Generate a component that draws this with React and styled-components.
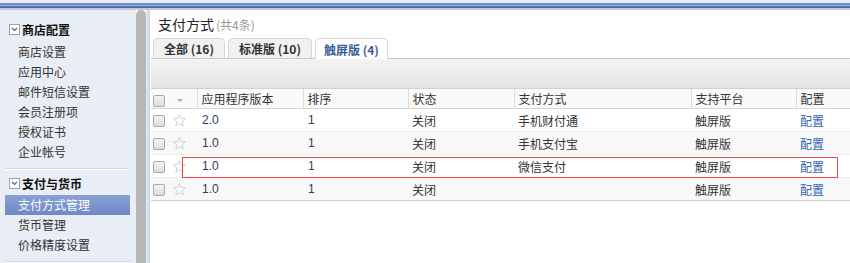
import React from 'react';
import styled, { createGlobalStyle } from 'styled-components';

const GlobalStyle = createGlobalStyle`
  html, body { margin: 0; padding: 0; background: #fff; }
  body {
    font-family: "Liberation Sans", Arial, "Noto Sans CJK SC", sans-serif;
    font-size: 12px;
    color: #333;
  }
`;

const Page = styled.div`
  width: 850px;
  height: 263px;
  overflow: hidden;
  display: flex;
  flex-direction: column;
`;

const TopBar = styled.div`
  height: 10px;
  flex: none;
  background: linear-gradient(to bottom,
    #e9eef5 0, #e9eef5 3px,
    #7d9ad3 3px, #5579bf 5px,
    #a9bde3 5px, #a9bde3 6px,
    #4d6fb4 6px, #4d6fb4 8px,
    #c3c9d6 8px, #c3c9d6 10px);
`;

const Body = styled.div`
  flex: 1;
  display: flex;
  min-height: 0;
`;

const Sidebar = styled.div`
  width: 136px;
  flex: none;
  background: #e9edf5;
`;

const Scrollbar = styled.div`
  width: 10px;
  flex: none;
  background: #b6b6b6;
  border-radius: 5px 5px 0 0;
`;

const Edge = styled.div`
  width: 4px;
  flex: none;
  background: linear-gradient(to right, #e6ebf4, #c4d2ec);
`;

const Group = styled.div`
  padding: ${p => p.$first ? '9px' : '4px'} 0 6px;
  margin: 0 6px 0 5px;
  border-bottom: 1px solid #d3dae6;
  box-shadow: 0 1px 0 #fafbfd;
`;

const GroupTitle = styled.div`
  display: flex;
  align-items: center;
  gap: 2px;
  height: 20px;
  margin-bottom: ${p => p.$first ? '3px' : '2px'};
  padding-left: 4px;
  font-family: "Noto Sans CJK SC", sans-serif;
  font-weight: bold;
  font-size: 12px;
  color: #111;
`;

const Toggle = styled.span`
  width: 9px;
  height: 9px;
  border: 1px solid #9aa3b3;
  background: #fff;
  display: inline-flex;
  align-items: center;
  justify-content: center;
  flex: none;
`;

const NavItem = styled.div`
  height: 20px;
  line-height: 20px;
  padding-left: 13px;
  font-family: "Noto Sans CJK SC", sans-serif;
  font-size: 12px;
  color: ${p => p.$active ? '#fff' : '#333'};
  background: ${p => p.$active ? 'linear-gradient(to bottom, #8aa1d6, #6f89c6)' : 'transparent'};
`;

const Main = styled.div`
  flex: 1;
  position: relative;
  background: #fff;
  padding-left: 1px;
`;

const Title = styled.div`
  height: 28px;
  padding: 0 0 0 7px;
  display: flex;
  align-items: center;
  font-family: "Noto Sans CJK SC", sans-serif;
  font-size: 14px;
  color: #222;
`;

const Count = styled.span`
  font-size: 12px;
  color: #999;
  margin-left: 2px;
`;

const Tabs = styled.div`
  display: flex;
  align-items: flex-end;
  gap: 3px;
  height: 20px;
  padding-left: 2px;
  border-bottom: 1px solid #c9c9c9;
`;

const Tab = styled.div`
  height: ${p => p.$active ? '20px' : '19px'};
  padding: 0 ${p => p.$active ? '8px' : '10px'};
  margin-bottom: ${p => p.$active ? '-1px' : '0'};
  display: flex;
  align-items: center;
  border: 1px solid #d6d6d6;
  border-bottom: none;
  border-radius: 5px 5px 0 0;
  background: ${p => p.$active ? '#fff' : '#f1f1f1'};
  font-family: "Noto Sans CJK SC", sans-serif;
  font-weight: bold;
  font-size: 12px;
  color: ${p => p.$active ? '#3d5d9b' : '#333'};
`;

const Toolbar = styled.div`
  height: 29px;
  background: linear-gradient(to bottom, #f3f3f3, #e4e4e4);
  border-bottom: 1px solid #d2d2d2;
`;

const Table = styled.table`
  width: 100%;
  border-collapse: collapse;
  table-layout: fixed;
`;

const Th = styled.th`
  height: 19px;
  padding: 0 0 0 ${p => p.$pad ?? 4}px;
  text-align: left;
  font-weight: normal;
  font-family: "Noto Sans CJK SC", sans-serif;
  font-size: 12px;
  color: #333;
  background: #fafafa;
  border-bottom: 1px solid #d6d6d6;
  border-left: ${p => p.$noSep ? 'none' : '1px solid #dcdcdc'};
`;

const Tr = styled.tr`
  background: ${p => p.$alt ? '#f8f8f8' : '#fff'};
`;

const Td = styled.td`
  height: 22px;
  padding: 0 0 0 ${p => p.$pad || 4}px;
  font-family: "Liberation Sans", Arial, "Noto Sans CJK SC", sans-serif;
  font-size: 12px;
  color: ${p => p.$num ? '#2e3e5e' : '#333'};
  border-bottom: 1px solid ${p => p.$last ? '#d0d0d0' : '#ececec'};
  white-space: nowrap;
`;

const Check = styled.span`
  display: inline-block;
  width: 10px;
  height: 10px;
  border: 1px solid #a9a9a9;
  border-radius: 2px;
  background: linear-gradient(to bottom, #f4f4f4, #dcdcdc);
  vertical-align: middle;
`;

const Caret = styled.span`
  display: inline-block;
  width: 0;
  height: 0;
  border-left: 3px solid transparent;
  border-right: 3px solid transparent;
  border-top: 3px solid #aaa;
  margin-left: 7px;
  vertical-align: middle;
`;

const Link = styled.a`
  color: #3464b4;
  text-decoration: none;
  font-family: "Noto Sans CJK SC", sans-serif;
`;

const Highlight = styled.div`
  position: absolute;
  left: 32px;
  top: 147px;
  width: 654px;
  height: 19px;
  border: 1px solid #e84a4a;
  pointer-events: none;
`;

const Star = () => (
  <svg width="15" height="15" viewBox="0 0 24 24" style={{ display: 'block' }}>
    <path
      d="M12 2.5l2.9 6.2 6.6.7-4.9 4.5 1.4 6.6L12 17.2l-5.9 3.3 1.4-6.6-4.9-4.5 6.6-.7z"
      fill="none"
      stroke="#c9c9c9"
      strokeWidth="1.4"
      strokeLinejoin="round"
    />
  </svg>
);

const ToggleIcon = () => (
  <svg width="7" height="5" viewBox="0 0 7 5">
    <path d="M1 1l2.5 2.5L6 1" fill="none" stroke="#666" strokeWidth="1.2" />
  </svg>
);

const nav = [
  { title: '商店配置', items: ['商店设置', '应用中心', '邮件短信设置', '会员注册项', '授权证书', '企业帐号'] },
  { title: '支付与货币', items: ['支付方式管理', '货币管理', '价格精度设置'] },
];

const rows = [
  { ver: '2.0', sort: '1', status: '关闭', method: '手机财付通', platform: '触屏版' },
  { ver: '1.0', sort: '1', status: '关闭', method: '手机支付宝', platform: '触屏版' },
  { ver: '1.0', sort: '1', status: '关闭', method: '微信支付', platform: '触屏版' },
  { ver: '1.0', sort: '1', status: '关闭', method: '', platform: '触屏版' },
];

export default function App() {
  return (
    <Page>
      <GlobalStyle />
      <TopBar />
      <Body>
        <Sidebar>
          {nav.map((g, gi) => (
            <Group key={g.title} $first={gi === 0}>
              <GroupTitle $first={gi === 0}>
                <Toggle><ToggleIcon /></Toggle>
                {g.title}
              </GroupTitle>
              {g.items.map(it => (
                <NavItem key={it} $active={it === '支付方式管理'}>{it}</NavItem>
              ))}
            </Group>
          ))}
        </Sidebar>
        <Scrollbar />
        <Edge />
        <Main>
          <Title>支付方式<Count>(共4条)</Count></Title>
          <Tabs>
            <Tab>全部 (16)</Tab>
            <Tab>标准版 (10)</Tab>
            <Tab $active>触屏版 (4)</Tab>
          </Tabs>
          <Toolbar />
          <Table>
            <colgroup>
              <col style={{ width: 19 }} />
              <col style={{ width: 27 }} />
              <col style={{ width: 106 }} />
              <col style={{ width: 105 }} />
              <col style={{ width: 106 }} />
              <col style={{ width: 177 }} />
              <col style={{ width: 105 }} />
              <col />
            </colgroup>
            <thead>
              <tr>
                <Th $noSep $pad={2}><Check /></Th>
                <Th $noSep $pad={0}><Caret /></Th>
                <Th>应用程序版本</Th>
                <Th>排序</Th>
                <Th>状态</Th>
                <Th>支付方式</Th>
                <Th>支持平台</Th>
                <Th>配置</Th>
              </tr>
            </thead>
            <tbody>
              {rows.map((r, i) => {
                const last = i === rows.length - 1;
                return (
                  <Tr key={i} $alt={i % 2 === 1}>
                    <Td $pad={2} $last={last}><Check /></Td>
                    <Td $pad={2} $last={last}><Star /></Td>
                    <Td $pad={5} $num $last={last}>{r.ver}</Td>
                    <Td $pad={5} $num $last={last}>{r.sort}</Td>
                    <Td $last={last}>{r.status}</Td>
                    <Td $last={last}>{r.method}</Td>
                    <Td $last={last}>{r.platform}</Td>
                    <Td $last={last}><Link href="#">配置</Link></Td>
                  </Tr>
                );
              })}
            </tbody>
          </Table>
          <Highlight />
        </Main>
      </Body>
    </Page>
  );
}
